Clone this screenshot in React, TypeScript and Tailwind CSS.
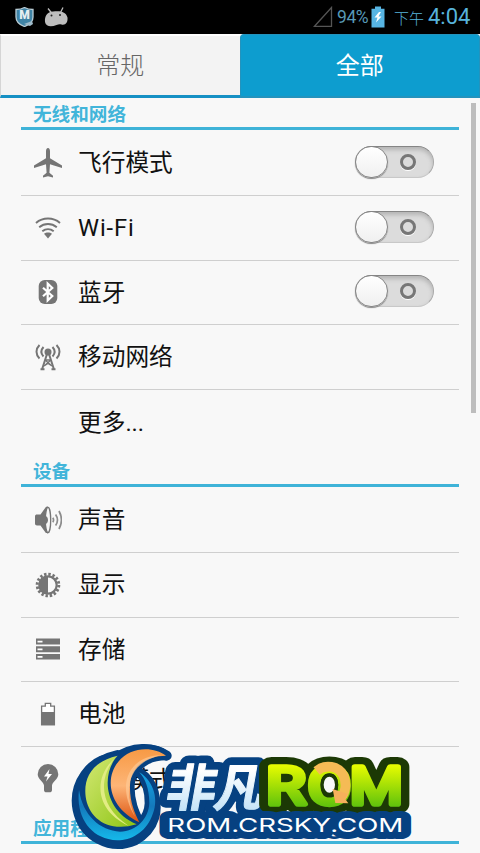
import * as React from 'react';

interface RowItem {
    label: string;
    icon?: React.ElementType;
    toggle?: boolean;
}

function PlaneIcon() {
    return (
        <svg viewBox="0 0 30 32" className="w-[30px] h-8" fill="#757575">
            <path d="M15 1c-1.300 0-2 1.500-2 3.500v6.800L1 18.600v2.300l12-3.700.6 8.600-3.600 3v1.600l5-1.200 5 1.200v-1.600l-3.600-3 .6-8.600 12 3.700v-2.300l-12-7.300V4.500C17 2.500 16.300 1 15 1z" />
        </svg>
    );
}

function WifiIcon() {
    return (
        <svg viewBox="0 0 26 22" className="w-[26px] h-[22px]" fill="none" stroke="#757575" strokeWidth="2">
            <path d="M1 6C8 .1 18 .1 25 6M4.200 10.200c5.200-4.200 12.400-4.200 17.600 0M7.300 14.200c3.400-2.700 8-2.700 11.400 0" />
            <path d="M9 16.700c2.200-1.700 5.800-1.700 8 0L13 21.500z" fill="#757575" stroke="none" />
        </svg>
    );
}

function BluetoothIcon() {
    return (
        <svg viewBox="0 0 20 26" className="w-5 h-[26px]">
            <rect x=".7" y="1" width="18.600" height="24" rx="6" fill="#757575" />
            <path d="M5 8.700l9.300 8.300-4.600 4.500v-17l4.600 4.500L5 17.300" fill="none" stroke="#fff" strokeWidth="2.200" />
        </svg>
    );
}

function TowerIcon() {
    return (
        <svg viewBox="0 0 26 28" className="w-[26px] h-7" fill="none" stroke="#757575" strokeWidth="2">
            <path d="M4.500 2C.5 6 .5 11.500 4.500 15.500M8.500 4c-2.700 3-2.700 6.500 0 9.500M21.500 2c4 4 4 9.500 0 13.500M17.500 4c2.700 3 2.700 6.500 0 9.500" />
            <circle cx="13" cy="9" r="3.500" fill="#757575" stroke="none" />
            <path d="M12 11L7 26.500M14 11l5 15.500M5.500 26.300h4M16.500 26.300h4" />
            <path d="M10.500 17h5M10 17l7 6M16 17l-7 6M9 23l4-2.500 4 2.500" strokeWidth="1.300" />
        </svg>
    );
}

function SoundIcon() {
    return (
        <svg viewBox="0 0 28 28" className="w-7 h-7">
            <path d="M1 10.500c0-1.500.8-2 2-2h3.500L11.500 1.500C12 .8 12.500.6 14 .6v26.800c-1.500 0-2-.2-2.500-.9l-5-7H3c-1.200 0-2-.7-2-2z" fill="#757575" />
            <ellipse cx="14" cy="14" rx="2.700" ry="12.700" fill="#f8f8f8" stroke="#757575" strokeWidth="1.300" />
            <path d="M11.500 10c3.300.7 3.300 7.300 0 8z" fill="#757575" />
            <path d="M18.800 11.800c1 1.500 1 3 0 4.500M21.600 8.500c2.400 3.500 2.400 7.500 0 11M25 5c3 5.500 3 12.500 0 18" fill="none" stroke="#8c8c8c" strokeWidth="1.700" />
        </svg>
    );
}

function BrightnessIcon() {
    return (
        <svg viewBox="0 0 26 26" className="w-[26px] h-[26px]">
            <circle cx="13" cy="13" r="10.800" fill="none" stroke="#757575" strokeWidth="3" strokeDasharray="2.400 1.840" />
            <circle cx="13" cy="13" r="8.700" fill="#f8f8f8" stroke="#757575" strokeWidth="2.200" />
            <path d="M13 4a9 9 0 0 0 0 18z" fill="#757575" />
        </svg>
    );
}

function StorageIcon() {
    return (
        <svg viewBox="0 0 24 22" className="w-6 h-[22px]">
            <path d="M0 .5h24v6H0zM0 8.300h24v6H0zM0 16h24v5.500H0z" fill="#757575" />
            <path d="M1.500 2.800h5v1.700h-5zM1.500 10.500h5v1.700h-5zM1.500 18h5v1.700h-5z" fill="#fff" />
        </svg>
    );
}

function BatteryIcon() {
    return (
        <svg viewBox="0 0 16 24" className="w-4 h-6">
            <path d="M1.600 4.200h3.700V1.300h5.400v2.900h3.700v18.500H1.600z" fill="#fff" stroke="#757575" strokeWidth="1.300" />
            <path d="M1 10h14v13.300H1z" fill="#757575" />
        </svg>
    );
}

function BulbIcon() {
    return (
        <svg viewBox="0 0 22 30" className="-mt-1 w-[22px] h-[30px]">
            <path d="M11 1A10.300 10.300 0 0 0 .7 11.300c0 5 5.800 7.500 6.300 11.200v4.500c0 1.500 1 2.300 2.500 2.300h3c1.500 0 2.500-.8 2.500-2.300v-4.500c.5-3.700 6.300-6.200 6.300-11.200A10.300 10.300 0 0 0 11 1z" fill="#757575" />
            <path d="M12.500 6L7 13.500h3.500L9 18.500l6-7.500h-3.500z" fill="#fff" />
        </svg>
    );
}

const networkItems: RowItem[] = [
    { label: '飞行模式', icon: PlaneIcon, toggle: true },
    { label: 'Wi-Fi', icon: WifiIcon, toggle: true },
    { label: '蓝牙', icon: BluetoothIcon, toggle: true },
    { label: '移动网络', icon: TowerIcon },
    { label: '更多...' },
];

const deviceItems: RowItem[] = [
    { label: '声音', icon: SoundIcon },
    { label: '显示', icon: BrightnessIcon },
    { label: '存储', icon: StorageIcon },
    { label: '电池', icon: BatteryIcon },
    { label: '省电模式', icon: BulbIcon },
];

function StatusBar() {
    return (
        <div className="flex h-[34px] shrink-0 items-center bg-black pl-[15px] pr-[9px] text-[#58b4dc]">
            <svg viewBox="0 0 20 20" className="h-5 w-5">
                <path d="M1 2.500C4 2.500 7 2 9.500.5 12 2 15 2.500 18 2.500V10c0 5-4 8-8.500 9.500C5 18 1 15 1 10z" fill="#3f83a5" stroke="#b9cdd6" strokeWidth="1.300" />
                <path d="M9 17l8-3 1 3-3 2z" fill="#9fbccb" />
                <text x="9.500" y="12" fontSize="12" fontWeight="900" textAnchor="middle" fill="#e6eef2" fontFamily="Roboto">M</text>
            </svg>
            <svg viewBox="0 0 24 20" className="ml-[9px] h-5 w-6" fill="#bdbdbd">
                <path d="M4 1.500l4 5M19 .5l-3 6" stroke="#bdbdbd" strokeWidth="1.300" />
                <path d="M1 15C.5 9 3 5 9 4.500c7-1 13 0 14.500 6 .5 5-2 8-6 7-2-.5-3-.3-5 .5-5 2-10.500 2-11.500-3z" />
                <circle cx="7.500" cy="8.500" r="1" fill="#222" />
                <circle cx="16" cy="8" r="1" fill="#222" />
            </svg>
            <div className="ml-auto flex items-center">
                <svg viewBox="0 0 20 22" className="mr-1 h-[22px] w-5" fill="none" stroke="#555" strokeWidth="1.300">
                    <path d="M1.500 20.300L18.500 1.500v18.800z" />
                </svg>
                <span className="mt-0.5 w-[34px] text-[17.500px] leading-none tracking-[-0.4px] text-[#5799b7]">94%</span>
                <svg viewBox="0 0 14 22" className="-mt-px h-[22px] w-3.5">
                    <path d="M4 .5h6v2.300h3.500v18.700H.5V2.800H4z" fill="#57b5e3" />
                    <path d="M8 6l-4.500 5.500h3L5 16.500l5.500-6h-3L10 6z" fill="#fff" />
                </svg>
                <span className="ml-[9px] mt-1 w-[30px] whitespace-nowrap text-[15px] font-light leading-none">下午</span>
                <span className="ml-1 w-[43px] text-[22px] leading-none">4:04</span>
            </div>
        </div>
    );
}

function Tabs() {
    return (
        <div className="flex h-16 shrink-0 text-2xl font-light">
            <div className="flex flex-1 items-center justify-center border-b-[3px] border-l border-t-2 border-b-[#1590c4] border-l-[#d5d5d5] border-t-white bg-[#f3f3f3] pt-px text-[#666]">
                常规
            </div>
            <div className="flex flex-1 items-center justify-center rounded-t-sm border border-b-2 border-[#2493bd] bg-[#0d9dcf] font-normal text-white">
                全部
            </div>
        </div>
    );
}

function Toggle() {
    return (
        <div className="-mt-0.5 mr-[25px] flex h-8 w-[79px] items-center rounded-full border border-t-[#858585] border-x-[#aaa] border-b-[#c8c8c8] bg-[#dcdcdc] shadow-[inset_0_3px_4px_#b5b5b5]">
            <div className="-ml-px h-8 w-[33px] rounded-full border border-[#868686] bg-linear-to-b from-white to-[#f0f0f0] shadow-[0_1px_1px_#888]" />
            <div className="ml-3 h-4 w-4 rounded-full border-[3px] border-[#777] shadow-[0_1px_0_#fff]" />
        </div>
    );
}

function SectionTitle({ title }: { title: string }) {
    return (
        <div className="flex h-8 items-end border-b-[3px] border-[#3fb3d8] pb-px pl-3 text-[18.600px] font-bold leading-[22px] text-[#42b5da]">
            {title}
        </div>
    );
}

function Section({ items }: { items: RowItem[] }) {
    return (
        <div className="divide-y divide-[#cfcfcf] pt-px">
            {items.map((item) => {
                const Icon = item.icon;
                return (
                    <div key={item.label} className="flex h-[64.800px] items-center">
                        <div className="flex w-[54px] shrink-0 justify-center">{Icon && <Icon />}</div>
                        <span className="ml-[3px] flex-1 whitespace-nowrap pt-0.5 text-[23.700px] leading-none text-[#111]">
                            {item.label === 'Wi-Fi' ? <span className="tracking-[0.9px]">{item.label}</span> : item.label}
                        </span>
                        {item.toggle && <Toggle />}
                    </div>
                );
            })}
        </div>
    );
}

const GREEN = 'M293 62C215 80 190 130 197 185C205 245 260 295 350 268C245 222 247 110 293 62z';
const ORANGE = 'M438 62C400 33 330 35 295 80C252 132 268 220 358 262C345 235 328 200 330 150C332 95 380 62 438 62z';
const RING = 'M358 112C404 140 418 200 395 245C370 305 310 325 265 312C205 298 168 240 177 165C188 240 240 287 300 290C350 290 386 250 388 205C388 160 375 130 358 112z';

function Watermark() {
    return (
        <svg viewBox="120 0 1080 354" className="absolute left-[60px] top-[735px] h-[118px] w-[360px]" strokeLinejoin="round" strokeLinecap="round">
            <defs>
                <linearGradient id="lime" gradientUnits="userSpaceOnUse" x1="0" y1="90" x2="0" y2="215">
                    <stop offset="0" stopColor="#e8fc00" />
                    <stop offset="1" stopColor="#5fc20c" />
                </linearGradient>
                <linearGradient id="leaf" x1="0" y1="0" x2="1" y2="1">
                    <stop offset="0" stopColor="#d3e873" />
                    <stop offset="1" stopColor="#8dc414" />
                </linearGradient>
                <linearGradient id="flame" x1="0" y1="0" x2="0" y2="1">
                    <stop offset="0" stopColor="#f79a45" />
                    <stop offset=".5" stopColor="#fdb577" />
                    <stop offset="1" stopColor="#dc5310" />
                </linearGradient>
                <linearGradient id="sea" x1="0" y1="0" x2="0" y2="1">
                    <stop offset="0" stopColor="#14a6e5" />
                    <stop offset=".5" stopColor="#1479bc" />
                    <stop offset="1" stopColor="#15b8e9" />
                </linearGradient>
                <linearGradient id="ice" x1="0" y1="0" x2="0" y2="1">
                    <stop offset=".3" stopColor="#fff" />
                    <stop offset="1" stopColor="#b5dcf6" />
                </linearGradient>
            </defs>

            <g fill="#064181" stroke="#064181">
                <path d={GREEN} strokeWidth="34" />
                <path d={ORANGE} strokeWidth="28" />
                <path d={RING} strokeWidth="28" />
                <path d="M440 62C400 34 335 34 288 70C210 68 158 150 173 225C190 305 270 348 345 316C405 283 422 220 393 165" fill="none" strokeWidth="30" />
            </g>
            <path d={RING} fill="url(#sea)" />
            <path d={GREEN} fill="url(#leaf)" />
            <path d="M282 72C222 125 222 225 325 272C243 218 232 140 282 72z" fill="#e2ec83" />
            <path d={ORANGE} fill="url(#flame)" />
            <path d="M425 60C330 62 285 145 345 245C303 150 335 80 425 60z" fill="#ffcb96" opacity=".65" />

            <g transform="translate(440 213) skewX(-10)" fontWeight="700" fontSize="150" fontFamily="'Noto Sans CJK SC', sans-serif" fill="#064181" stroke="#064181" strokeWidth="50">
                <text x="-8" y="0">非</text>
                <text x="137" y="0">凡</text>
            </g>
            <g transform="translate(440 213) skewX(-10)" fontWeight="700" fontSize="150" fontFamily="'Noto Sans CJK SC', sans-serif" fill="url(#ice)" stroke="url(#ice)" strokeWidth="3">
                <text x="-8" y="0">非</text>
                <text x="137" y="0">凡</text>
            </g>

            <g fontFamily="Roboto, sans-serif" fontWeight="400" fontSize="154" fill="#1c3905" stroke="#1c3905" strokeWidth="60">
                <text x="739" y="206" textLength="118" lengthAdjust="spacingAndGlyphs">R</text>
                <text x="863" y="206" textLength="130" lengthAdjust="spacingAndGlyphs">O</text>
                <text x="990" y="206" textLength="158" lengthAdjust="spacingAndGlyphs">M</text>
            </g>
            <g fontFamily="Roboto, sans-serif" fontWeight="400" fontSize="154" fill="url(#lime)" stroke="url(#lime)" strokeWidth="17">
                <text x="739" y="206" textLength="118" lengthAdjust="spacingAndGlyphs">R</text>
                <text x="863" y="206" textLength="130" lengthAdjust="spacingAndGlyphs">O</text>
                <text x="990" y="206" textLength="158" lengthAdjust="spacingAndGlyphs">M</text>
            </g>
            <path d="M890 108C915 86 955 92 971 122C981 150 975 174 965 184" fill="none" stroke="#f5bb55" strokeWidth="29" strokeLinecap="butt" />
            <ellipse cx="928" cy="149" rx="22" ry="29" fill="#f8f8f8" stroke="#1c3905" strokeWidth="10" />
            <path d="M938 162l8 42 39 1-10-14 8-14z" fill="#f7b05b" />

            <text x="442" y="290" fontSize="57" fontFamily="Inter, sans-serif" fontWeight="400" textLength="708" lengthAdjust="spacingAndGlyphs" fill="#064181" stroke="#064181" strokeWidth="42">ROM.CRSKY.COM</text>
            <text x="442" y="290" fontSize="57" fontFamily="Inter, sans-serif" fontWeight="400" textLength="708" lengthAdjust="spacingAndGlyphs" fill="#fff">ROM.CRSKY.COM</text>
        </svg>
    );
}

export default function App() {
    return (
        <div className="relative flex h-[853px] w-[480px] flex-col overflow-hidden bg-[#f8f8f8] font-['Roboto','Noto_Sans_CJK_SC',sans-serif]">
            <StatusBar />
            <Tabs />
            <div className="flex min-h-0 flex-1">
                <main className="ml-[21px] w-[438px]">
                    <SectionTitle title="无线和网络" />
                    <Section items={networkItems} />
                    <SectionTitle title="设备" />
                    <Section items={deviceItems} />
                    <SectionTitle title="应用程序" />
                </main>
                <div className="ml-3 mt-[5px] h-[310px] w-[5px] bg-[#bdbdbd]" />
            </div>
            <Watermark />
        </div>
    );
}
